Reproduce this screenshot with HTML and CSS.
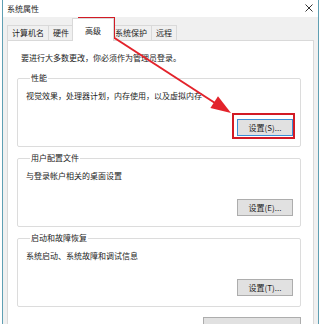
FILE: index.html
```html
<!DOCTYPE html>
<html lang="zh-CN">
<head>
<meta charset="utf-8">
<title>系统属性</title>
<link rel="stylesheet" href="styles.css">
</head>
<body>
<div class="window">
  <div class="titlebar">
    <span class="title">系统属性</span>
    <svg class="close" width="8" height="8" viewBox="0 0 8 8"><path d="M0.5 0.5 L7.5 7.5 M7.5 0.5 L0.5 7.5" stroke="#333" stroke-width="1" fill="none"/></svg>
  </div>
  <div class="tabs">
    <div class="tab">计算机名</div>
    <div class="tab">硬件</div>
    <div class="tab active">高级</div>
    <div class="tab">系统保护</div>
    <div class="tab">远程</div>
  </div>
  <div class="panel">
    <p class="intro">要进行大多数更改，你必须作为管理员登录。</p>
    <fieldset class="group">
      <legend>性能</legend>
      <p class="desc">视觉效果，处理器计划，内存使用，以及虚拟内存</p>
      <div class="actions"><button class="btn default">设置(S)...</button></div>
    </fieldset>
    <fieldset class="group">
      <legend>用户配置文件</legend>
      <p class="desc">与登录帐户相关的桌面设置</p>
      <div class="actions"><button class="btn">设置(E)...</button></div>
    </fieldset>
    <fieldset class="group">
      <legend>启动和故障恢复</legend>
      <p class="desc">系统启动、系统故障和调试信息</p>
      <div class="actions"><button class="btn">设置(T)...</button></div>
    </fieldset>
    <div class="actions bottom"><button class="btn wide" aria-label="环境变量"></button></div>
  </div>
</div>
<div class="mark mark-tab"></div>
<div class="mark mark-btn"></div>
<svg class="arrow" width="324" height="324" viewBox="0 0 324 324">
  <line x1="113" y1="37" x2="215" y2="103" stroke="#e3232b" stroke-width="2"/>
  <polygon points="231,113 210.4,108.1 218,96.3" fill="#e3232b"/>
</svg>
</body>
</html>
```

FILE: styles.css
```css
* { box-sizing: border-box; }
html, body {
  margin: 0;
  padding: 0;
  background: #ffffff;
  width: 324px;
  height: 324px;
  overflow: hidden;
}
body {
  font-family: "Noto Sans CJK SC", "Noto Sans", sans-serif;
  font-size: 8px;
  line-height: 12px;
  color: #1c1c1c;
  position: relative;
}
.window {
  margin-left: 2px;
  width: 317px;
  height: 324px;
  border-left: 1px solid #5f9fb3;
  border-right: 1px solid #5f9fb3;
  background: #f0f0f0;
}
.titlebar {
  height: 17px;
  background: #ffffff;
  display: flex;
  align-items: center;
  justify-content: space-between;
  padding: 0 5px 0 4px;
}
.title { line-height: 12px; margin-top: 1px; }
.close { margin-top: -2px; }
.tabs {
  height: 23px;
  display: flex;
  align-items: flex-end;
  padding-left: 4px;
}
.tab {
  height: 15px;
  border: 1px solid #d9d9d9;
  border-bottom: none;
  padding: 1px 4px 0;
  line-height: 12px;
  background: #f0f0f0;
  white-space: nowrap;
}
.tab + .tab { margin-left: -1px; }
.tab.active {
  height: 23px;
  margin: 0 -2px -1px -2px;
  padding: 6px 12px 0;
  background: #ffffff;
  position: relative;
  z-index: 1;
}
.tab.active + .tab { margin-left: -2px; }
.panel {
  margin: 0 4px;
  height: 284px;
  background: #ffffff;
  border: 1px solid #d9d9d9;
  border-bottom: none;
  padding: 11px 12px 0 9px;
}
.intro {
  margin: 0 0 8px 4px;
}
.group {
  margin: 0 0 5px 0;
  border: 1px solid #dcdcdc;
  border-radius: 2px;
  padding: 6px 7px 10px 8px;
  min-width: 0;
}
.group legend {
  padding: 0 1px;
  margin-left: 4px;
  line-height: 12px;
}
.desc { margin: 0; }
.actions {
  display: flex;
  justify-content: flex-end;
  margin-top: 17px;
}
.btn {
  font-family: inherit;
  font-size: 8px;
  line-height: 12px;
  color: #1c1c1c;
  width: 56px;
  height: 17px;
  padding: 0;
  background: #e1e1e1;
  border: 1px solid #adadad;
  border-radius: 0;
}
.btn.default { border-color: #3c8fd6; }
.actions.bottom { margin-top: 10px; padding-right: 0; }
.btn.wide { width: 98px; }
.mark {
  position: absolute;
  border: 2px solid #d21b25;
}
.mark-tab { left: 78px; top: 17px; width: 37px; height: 22px; }
.mark-btn { left: 232px; top: 113px; width: 63px; height: 26px; }
.arrow { position: absolute; left: 0; top: 0; pointer-events: none; }
```
